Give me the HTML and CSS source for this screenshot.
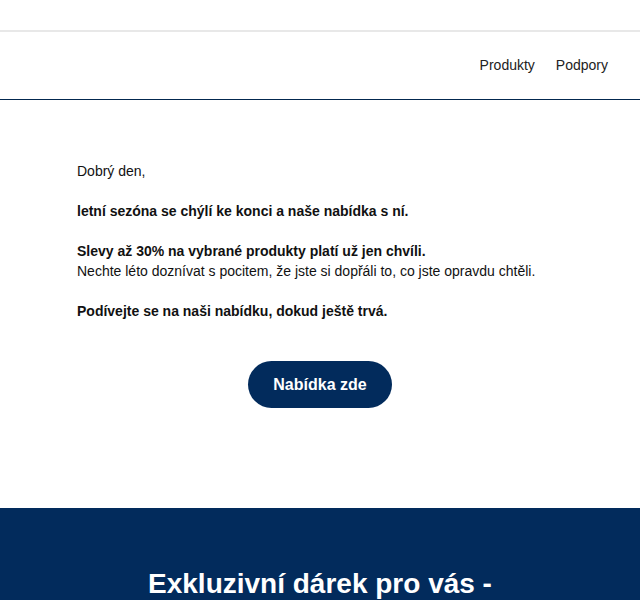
FILE: index.html
```html
<!DOCTYPE html>
<html lang="cs">
<head>
<meta charset="utf-8">
<title>Nabídka</title>
<link rel="stylesheet" href="styles.css">
</head>
<body>
<div class="topbar"></div>
<header class="header">
  <nav class="nav">
    <a class="nav-link" href="#">Produkty</a>
    <a class="nav-link" href="#">Podpory</a>
  </nav>
</header>
<main class="content">
  <p class="para">Dobrý den,</p>
  <p class="para"><strong>letní sezóna se chýlí ke konci a naše nabídka s ní.</strong></p>
  <p class="para"><strong>Slevy až 30% na vybrané produkty platí už jen chvíli.</strong><br>Nechte léto doznívat s pocitem, že jste si dopřáli to, co jste opravdu chtěli.</p>
  <p class="para"><strong>Podívejte se na naši nabídku, dokud ještě trvá.</strong></p>
  <div class="cta-row">
    <a class="cta" href="#">Nabídka zde</a>
  </div>
</main>
<section class="gift">
  <h2 class="gift-title">Exkluzivní dárek pro vás -</h2>
</section>
</body>
</html>
```
FILE: styles.css
```css
html, body {
  margin: 0;
  padding: 0;
  background: #ffffff;
  font-family: "Liberation Sans", Arial, sans-serif;
  color: #111111;
}
.topbar {
  height: 30px;
}
.header {
  border-top: 2px solid #e8e8e8;
  border-bottom: 1px solid #03284f;
  height: 65px;
  padding-bottom: 2px;
  display: flex;
  align-items: center;
  justify-content: flex-end;
  padding-right: 32px;
}
.nav {
  display: flex;
  gap: 21px;
}
.nav-link {
  font-size: 14px;
  color: #222222;
  text-decoration: none;
}
.content {
  padding: 61px 77px 0 77px;
}
.para {
  margin: 0 0 20px 0;
  font-size: 14px;
  line-height: 20px;
}
.cta-row {
  display: flex;
  justify-content: center;
  padding-top: 20px;
  padding-bottom: 100px;
}
.cta {
  display: flex;
  align-items: center;
  justify-content: center;
  width: 144px;
  height: 47px;
  border-radius: 24px;
  background: #022b5c;
  color: #ffffff;
  font-weight: bold;
  font-size: 16px;
  text-decoration: none;
}
.gift {
  background: #022b5c;
  padding-top: 59px;
  min-height: 200px;
}
.gift-title {
  margin: 0;
  text-align: center;
  color: #ffffff;
  font-size: 28px;
  line-height: 34px;
  font-weight: bold;
}
```
